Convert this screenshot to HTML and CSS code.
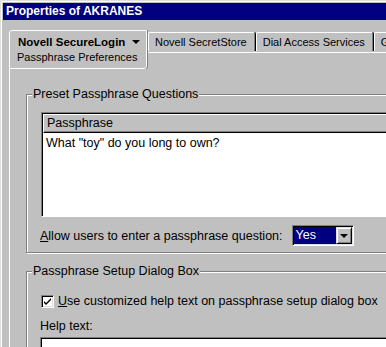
FILE: index.html
```html
<!DOCTYPE html>
<html lang="en">

<head>
    <meta charset="UTF-8">
    <meta name="viewport" content="width=device-width, initial-scale=1.0">
    <title>Properties of AKRANES</title>
    <link rel="stylesheet" href="styles.css">
</head>

<body>
    <div class="dialog">
        <div class="titlebar">Properties of AKRANES</div>

        <div class="tabs">
            <div class="tab active">
                <div class="tab-main">Novell SecureLogin <span class="caret"></span></div>
                <div class="tab-sub">Passphrase Preferences</div>
            </div>
            <div class="tab">Novell SecretStore</div>
            <div class="tab">Dial Access Services</div>
            <div class="tab">General</div>
        </div>

        <div class="panel">
            <div class="group">
                <span class="group-label">Preset Passphrase Questions</span>
                <div class="listview">
                    <div class="list-header">Passphrase</div>
                    <div class="list-body">
                        <div class="list-row">What "toy" do you long to own?</div>
                    </div>
                </div>
                <div class="option-row">
                    <span><u>A</u>llow users to enter a passphrase question:</span>
                    <div class="combo">
                        <span class="combo-value">Yes</span>
                        <span class="combo-button"><span class="arrow"></span></span>
                    </div>
                </div>
            </div>

            <div class="group group-setup">
                <span class="group-label">Passphrase Setup Dialog Box</span>
                <label class="check-row">
                    <span class="checkbox">
                        <svg width="9" height="9" viewBox="0 0 9 9">
                            <path d="M1 4 L3 6 L8 1 L8 3 L3 8 L1 6 Z" fill="#000" />
                        </svg>
                    </span>
                    <span><u>U</u>se customized help text on passphrase setup dialog box</span>
                </label>
                <div class="help-label">Help text:</div>
                <div class="textbox"></div>
            </div>
        </div>
    </div>
</body>

</html>
```

FILE: styles.css
```css
body {
    margin: 0;
    padding: 0;
    overflow: hidden;
    background: #c0c0c0;
    font-family: 'Liberation Sans', Arial, sans-serif;
    font-size: 12.5px;
    color: #000;
}

.dialog {
    width: 430px;
    height: 360px;
    padding: 2px;
    background: #c0c0c0;
    border-top: 1px solid #dfdfdf;
    border-left: 1px solid #dfdfdf;
    box-shadow: inset 1px 1px 0 #fff;
}

.titlebar {
    height: 17px;
    line-height: 17px;
    padding-left: 3px;
    background: #000080;
    color: #fff;
    font-weight: bold;
    font-size: 12px;
}

/* tab strip */
.tabs {
    display: flex;
    align-items: flex-start;
    margin: 10px 0 0 6px;
    font-size: 11px;
}

.tab {
    height: 18px;
    line-height: 18px;
    margin-top: 2px;
    padding: 0 7px 0 6px;
    border-top: 1px solid #fff;
    border-left: 1px solid #fff;
    border-right: 1px solid #808080;
    border-radius: 2px 2px 0 0;
    box-shadow: 1px 0 0 #000;
    margin-right: 1px;
    white-space: nowrap;
}

.tab.active {
    position: relative;
    z-index: 1;
    height: 37px;
    line-height: normal;
    margin-top: 0;
    margin-bottom: -17px;
    margin-right: 1px;
    padding: 0 0 0 7px;
    width: 129px;
    background: #c0c0c0;
    border: 1px solid #fff;
    border-radius: 3px 0 3px 0;
    box-shadow: 1px 0 0 #808080;
}

.tab-main {
    display: flex;
    align-items: center;
    justify-content: space-between;
    padding: 5px 6px 0 1px;
    font-weight: bold;
    font-size: 11.5px;
}

.caret {
    width: 0;
    height: 0;
    border-left: 4px solid transparent;
    border-right: 4px solid transparent;
    border-top: 4px solid #000;
}

.tab-sub {
    margin-top: 3px;
}

/* tab page */
.panel {
    display: flex;
    flex-direction: column;
    gap: 18px;
    margin-left: 6px;
    padding: 41px 0 0 16px;
    border-top: 1px solid #fff;
    border-left: 1px solid #fff;
}

.group {
    position: relative;
    padding: 17px 0 6px 13px;
    border: 1px solid #808080;
    box-shadow: inset 1px 1px 0 #fff, 1px 1px 0 #fff;
}

.group-label {
    position: absolute;
    top: -8px;
    left: 5px;
    padding: 0 1px;
    background: #c0c0c0;
    line-height: 15px;
}

.listview {
    margin-left: 1px;
    height: 102px;
    border-top: 1px solid #808080;
    border-left: 1px solid #808080;
    border-bottom: 1px solid #fff;
    box-shadow: inset 1px 1px 0 #000;
    padding: 1px 0 0 1px;
    display: flex;
    flex-direction: column;
}

.list-header {
    height: 17px;
    line-height: 17px;
    padding-left: 3px;
    background: #c0c0c0;
    border-top: 1px solid #fff;
    border-left: 1px solid #fff;
    border-bottom: 1px solid #000;
    box-shadow: inset 0 -1px 0 #808080;
}

.list-body {
    flex: 1;
    background: #fff;
}

.list-row {
    padding: 3px 3px;
    line-height: 15px;
}

.option-row {
    display: flex;
    align-items: center;
    gap: 9px;
    margin-top: 8px;
}

.combo {
    display: flex;
    width: 58px;
    height: 17px;
    border-top: 1px solid #808080;
    border-left: 1px solid #808080;
    border-right: 1px solid #fff;
    border-bottom: 1px solid #fff;
    box-shadow: inset 1px 1px 0 #000, inset -1px -1px 0 #dfdfdf;
    padding: 1px;
}

.combo-value {
    flex: 1;
    background: #000080;
    color: #fff;
    line-height: 17px;
    padding-left: 2px;
}

.combo-button {
    width: 16px;
    height: 17px;
    box-sizing: border-box;
    display: flex;
    align-items: center;
    justify-content: center;
    background: #c0c0c0;
    border-top: 1px solid #dfdfdf;
    border-left: 1px solid #dfdfdf;
    border-right: 1px solid #000;
    border-bottom: 1px solid #000;
    box-shadow: inset 1px 1px 0 #fff, inset -1px -1px 0 #808080;
}

.arrow {
    width: 0;
    height: 0;
    border-left: 4px solid transparent;
    border-right: 4px solid transparent;
    border-top: 4px solid #000;
}

.group-setup {
    padding-top: 22px;
}

.check-row {
    display: flex;
    align-items: center;
    gap: 4px;
    margin-left: 1px;
}

.checkbox {
    width: 9px;
    height: 9px;
    padding: 1px;
    display: flex;
    align-items: center;
    justify-content: center;
    background: #fff;
    border-top: 1px solid #808080;
    border-left: 1px solid #808080;
    border-right: 1px solid #fff;
    border-bottom: 1px solid #fff;
    box-shadow: inset 1px 1px 0 #000, inset -1px -1px 0 #dfdfdf;
}

.help-label {
    margin-top: 11px;
    line-height: 15px;
}

.textbox {
    margin-top: 3px;
    height: 40px;
    background: #fff;
    border-top: 1px solid #808080;
    border-left: 1px solid #808080;
    box-shadow: inset 1px 1px 0 #000;
}
```
